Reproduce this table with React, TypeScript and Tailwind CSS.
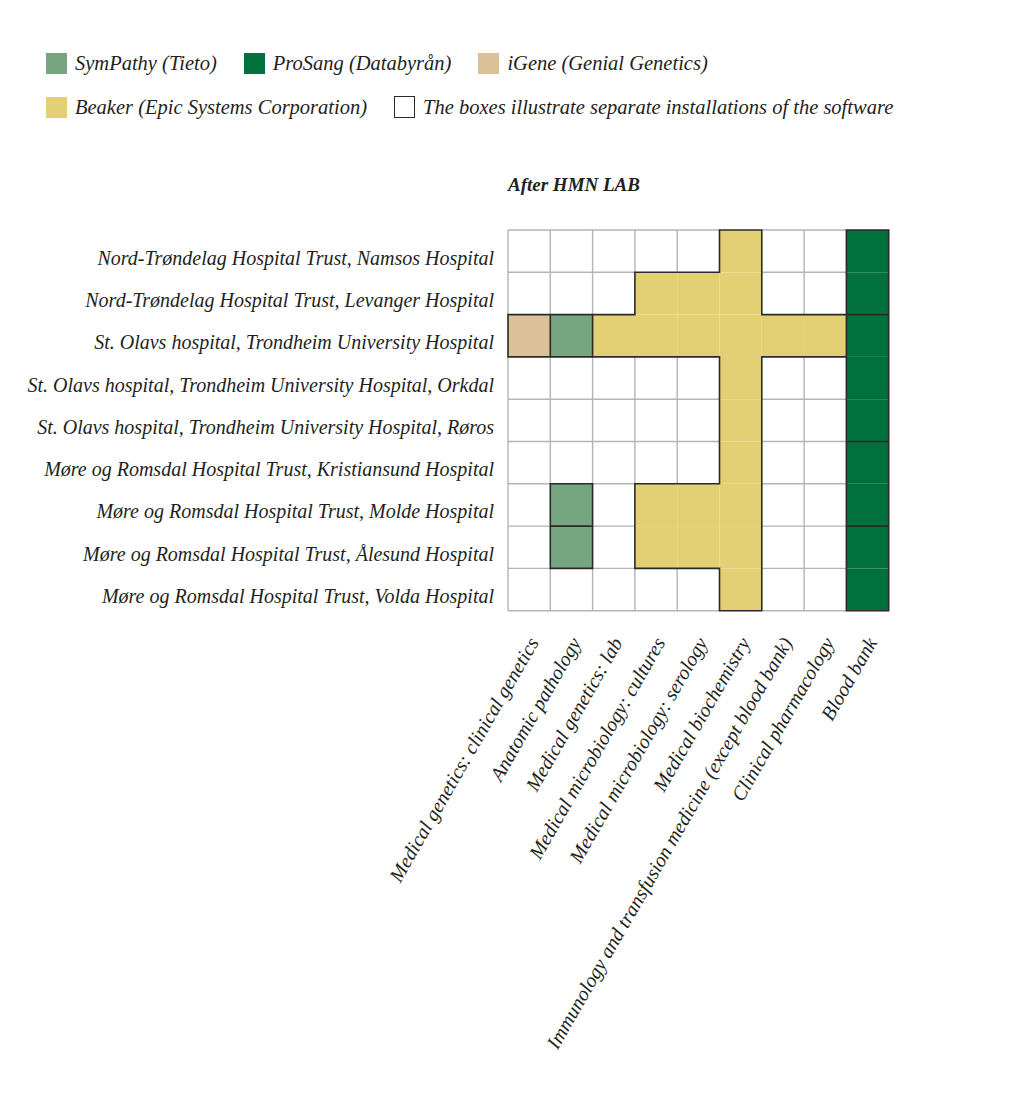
const hospitals = [
  "Nord-Trøndelag Hospital Trust, Namsos Hospital",
  "Nord-Trøndelag Hospital Trust, Levanger Hospital",
  "St. Olavs hospital, Trondheim University Hospital",
  "St. Olavs hospital, Trondheim University Hospital, Orkdal",
  "St. Olavs hospital, Trondheim University Hospital, Røros",
  "Møre og Romsdal Hospital Trust, Kristiansund Hospital",
  "Møre og Romsdal Hospital Trust, Molde Hospital",
  "Møre og Romsdal Hospital Trust, Ålesund Hospital",
  "Møre og Romsdal Hospital Trust, Volda Hospital",
];

const specialties = [
  "Medical genetics: clinical genetics",
  "Anatomic pathology",
  "Medical genetics: lab",
  "Medical microbiology: cultures",
  "Medical microbiology: serology",
  "Medical biochemistry",
  "Immunology and transfusion medicine (except blood bank)",
  "Clinical pharmacology",
  "Blood bank",
];

// each id is one installation; first letter picks the software
const installs = [
  ["", "", "", "", "", "Y", "", "", "G1"],
  ["", "", "", "Y", "Y", "Y", "", "", "G1"],
  ["T", "S1", "Y", "Y", "Y", "Y", "Y", "Y", "G2"],
  ["", "", "", "", "", "Y", "", "", "G2"],
  ["", "", "", "", "", "Y", "", "", "G2"],
  ["", "", "", "", "", "Y", "", "", "G3"],
  ["", "S2", "", "Y", "Y", "Y", "", "", "G3"],
  ["", "S3", "", "Y", "Y", "Y", "", "", "G4"],
  ["", "", "", "", "", "Y", "", "", "G4"],
];

const fills: Record<string, string> = {
  Y: "#e3cf74",
  T: "#dcc09a",
  S: "#76a580",
  G: "#00703c",
};

const CELL = 42.3;
const PAD = 1;
const N = 9;

function Matrix() {
  const at = (r: number, c: number) =>
    r < 0 || r >= N || c < 0 || c >= N ? "" : installs[r][c];

  const grey: string[] = [];
  const dark: string[] = [];
  const push = (a: string, b: string, d: string) => {
    if (a === b && a !== "") return;
    if (a === "" && b === "") grey.push(d);
    else dark.push(d);
  };

  for (let r = 0; r <= N; r++) {
    for (let c = 0; c < N; c++) {
      const y = PAD + r * CELL;
      const x = PAD + c * CELL;
      push(at(r - 1, c), at(r, c), `M${x} ${y}H${x + CELL}`);
    }
  }
  for (let c = 0; c <= N; c++) {
    for (let r = 0; r < N; r++) {
      const x = PAD + c * CELL;
      const y = PAD + r * CELL;
      push(at(r, c - 1), at(r, c), `M${x} ${y}V${y + CELL}`);
    }
  }

  const size = CELL * N + PAD * 2;

  return (
    <svg width={size} height={size} viewBox={`0 0 ${size} ${size}`} className="block">
      {installs.map((row, r) =>
        row.map((id, c) =>
          id ? (
            <rect
              key={`${r}-${c}`}
              x={PAD + c * CELL}
              y={PAD + r * CELL}
              width={CELL}
              height={CELL}
              fill={fills[id[0]]}
            />
          ) : null
        )
      )}
      <path d={grey.join("")} stroke="#b5b5b5" strokeWidth={1.4} fill="none" />
      <path
        d={dark.join("")}
        stroke="#2a2a2a"
        strokeWidth={1.6}
        strokeLinecap="square"
        fill="none"
      />
    </svg>
  );
}

function Swatch({ color, label }: { color?: string; label: string }) {
  return (
    <div className="flex items-center gap-[8px]">
      <span
        className={
          color
            ? "w-[21px] h-[21px] shrink-0"
            : "w-[21px] h-[22px] shrink-0 border-[1.5px] border-[#2a2a2a] bg-white"
        }
        style={color ? { backgroundColor: color } : undefined}
      />
      <span className="text-[20.5px] leading-[22px]">{label}</span>
    </div>
  );
}

export default function App() {
  return (
    <div className="w-[1024px] h-[1100px] bg-white text-[#231f20] italic font-['Liberation_Serif',serif]">
      <div className="pt-[52px] pl-[46px] flex flex-col gap-[22px]">
        <div className="flex items-center gap-[27px]">
          <Swatch color="#76a580" label="SymPathy (Tieto)" />
          <Swatch color="#00703c" label="ProSang (Databyrån)" />
          <Swatch color="#dcc09a" label="iGene (Genial Genetics)" />
        </div>
        <div className="flex items-center gap-[27px]">
          <Swatch color="#e3cf74" label="Beaker (Epic Systems Corporation)" />
          <Swatch label="The boxes illustrate separate installations of the software" />
        </div>
      </div>

      <div className="pl-[508px] mt-[56px] text-[19px] leading-[22px] font-bold">
        After HMN LAB
      </div>

      <div className="mt-[33px] flex">
        <div className="w-[494px] pt-[1px] flex flex-col text-right text-[20px]">
          {hospitals.map((h) => (
            <div key={h} className="h-[42.3px] flex items-center justify-end pt-[13px]">
              {h}
            </div>
          ))}
        </div>
        <div className="ml-[13px]">
          <Matrix />
        </div>
      </div>

      <div className="relative ml-[508px] w-[400px] h-[460px]">
        {specialties.map((s, i) => (
          <span
            key={s}
            className="absolute whitespace-nowrap origin-right -rotate-60 text-[20px] leading-[20px]"
            style={{ right: 400 - (i * CELL + CELL / 2 + 4), top: 17 }}
          >
            {s}
          </span>
        ))}
      </div>
    </div>
  );
}
